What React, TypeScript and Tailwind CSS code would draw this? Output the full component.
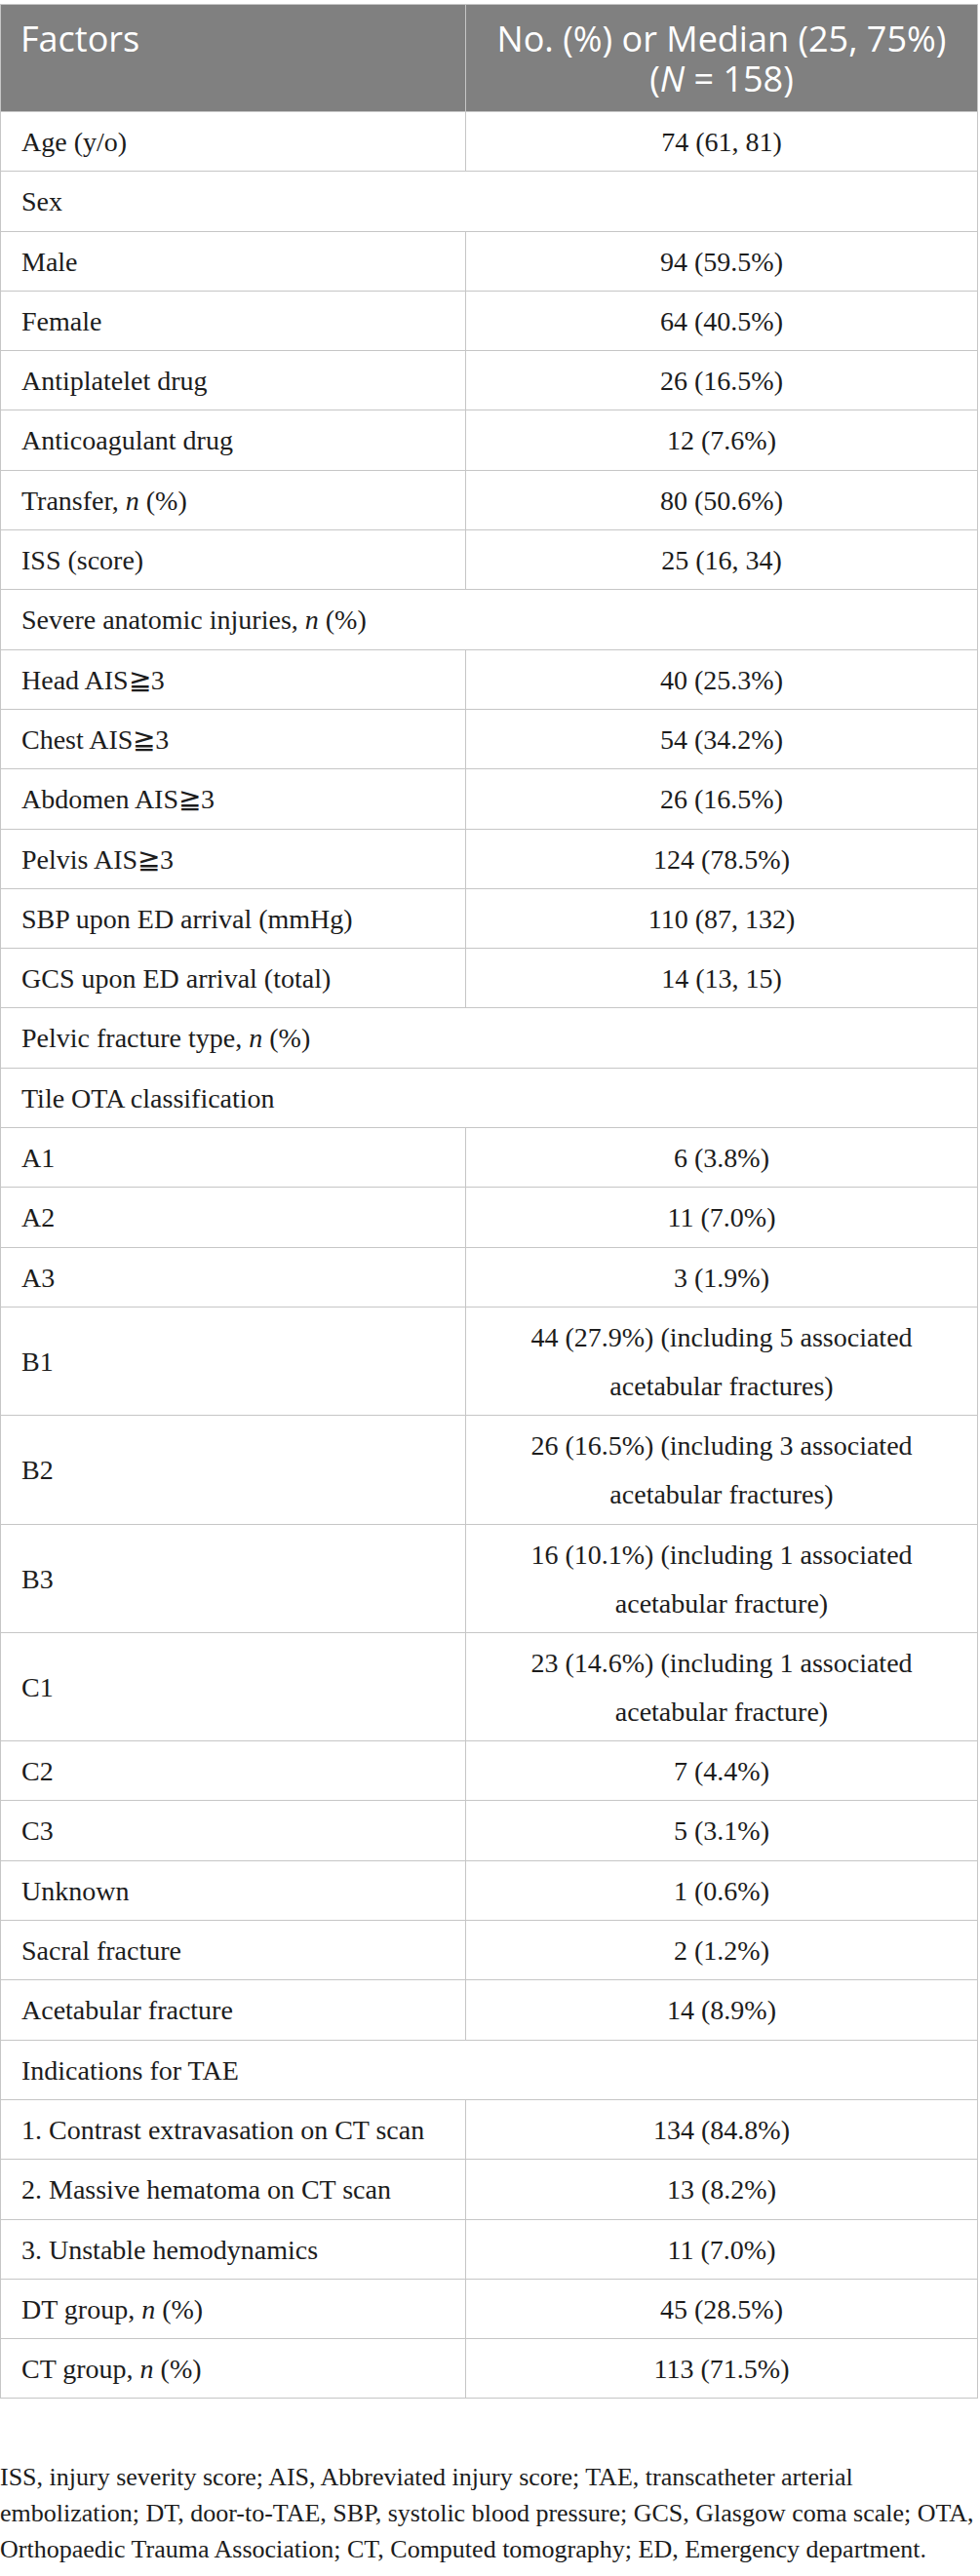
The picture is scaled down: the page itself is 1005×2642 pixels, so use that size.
/*
 * Table — baseline characteristics of TAE patients
 * Journal-style table: grey header band, hairline grid, serif body
 */

import type { ReactNode } from "react";

type Row =
  | { kind: "group"; label: ReactNode }
  | { kind: "item"; label: ReactNode; value: ReactNode };

const n = <i>n</i>;

const rows: Row[] = [
  { kind: "item", label: "Age (y/o)", value: "74 (61, 81)" },
  { kind: "group", label: "Sex" },
  { kind: "item", label: "Male", value: "94 (59.5%)" },
  { kind: "item", label: "Female", value: "64 (40.5%)" },
  { kind: "item", label: "Antiplatelet drug", value: "26 (16.5%)" },
  { kind: "item", label: "Anticoagulant drug", value: "12 (7.6%)" },
  { kind: "item", label: <>Transfer, {n} (%)</>, value: "80 (50.6%)" },
  { kind: "item", label: "ISS (score)", value: "25 (16, 34)" },
  { kind: "group", label: <>Severe anatomic injuries, {n} (%)</> },
  { kind: "item", label: "Head AIS≧3", value: "40 (25.3%)" },
  { kind: "item", label: "Chest AIS≧3", value: "54 (34.2%)" },
  { kind: "item", label: "Abdomen AIS≧3", value: "26 (16.5%)" },
  { kind: "item", label: "Pelvis AIS≧3", value: "124 (78.5%)" },
  { kind: "item", label: "SBP upon ED arrival (mmHg)", value: "110 (87, 132)" },
  { kind: "item", label: "GCS upon ED arrival (total)", value: "14 (13, 15)" },
  { kind: "group", label: <>Pelvic fracture type, {n} (%)</> },
  { kind: "group", label: "Tile OTA classification" },
  { kind: "item", label: "A1", value: "6 (3.8%)" },
  { kind: "item", label: "A2", value: "11 (7.0%)" },
  { kind: "item", label: "A3", value: "3 (1.9%)" },
  { kind: "item", label: "B1", value: <>44 (27.9%) (including 5 associated<br />acetabular fractures)</> },
  { kind: "item", label: "B2", value: <>26 (16.5%) (including 3 associated<br />acetabular fractures)</> },
  { kind: "item", label: "B3", value: <>16 (10.1%) (including 1 associated<br />acetabular fracture)</> },
  { kind: "item", label: "C1", value: <>23 (14.6%) (including 1 associated<br />acetabular fracture)</> },
  { kind: "item", label: "C2", value: "7 (4.4%)" },
  { kind: "item", label: "C3", value: "5 (3.1%)" },
  { kind: "item", label: "Unknown", value: "1 (0.6%)" },
  { kind: "item", label: "Sacral fracture", value: "2 (1.2%)" },
  { kind: "item", label: "Acetabular fracture", value: "14 (8.9%)" },
  { kind: "group", label: "Indications for TAE" },
  { kind: "item", label: "1. Contrast extravasation on CT scan", value: "134 (84.8%)" },
  { kind: "item", label: "2. Massive hematoma on CT scan", value: "13 (8.2%)" },
  { kind: "item", label: "3. Unstable hemodynamics", value: "11 (7.0%)" },
  { kind: "item", label: <>DT group, {n} (%)</>, value: "45 (28.5%)" },
  { kind: "item", label: <>CT group, {n} (%)</>, value: "113 (71.5%)" },
];

const cell = "border border-[#c6c6c6] pt-[6px] pb-[4.3px] leading-[50px] align-middle";

export default function App() {
  return (
    <div className="min-h-screen bg-white pt-[4px] text-[#1c1c1c]">
      <table
        className="w-[1003px] table-fixed border-collapse text-[28px]"
        style={{ fontFamily: '"Liberation Serif", "Times New Roman", serif' }}
      >
        <colgroup>
          <col className="w-[477px]" />
          <col />
        </colgroup>
        <thead>
          <tr
            className="bg-[#808080] text-white text-[36px] leading-[41px]"
            style={{ fontFamily: '"Open Sans", "Noto Sans", sans-serif' }}
          >
            <th className="border border-[#c6c6c6] pl-[20px] pt-[13.5px] pb-[13.5px] text-left align-top font-normal">
              Factors
            </th>
            <th className="border border-[#c6c6c6] px-[10px] pt-[13.5px] pb-[13.5px] text-center align-top font-normal">
              No. (%) or Median (25, 75%)
              <br />(<i>N</i> = 158)
            </th>
          </tr>
        </thead>
        <tbody>
          {rows.map((row, i) =>
            row.kind === "group" ? (
              <tr key={i}>
                <td colSpan={2} className={`${cell} pl-[21px] text-left`}>
                  {row.label}
                </td>
              </tr>
            ) : (
              <tr key={i}>
                <td className={`${cell} pl-[21px] text-left`}>{row.label}</td>
                <td className={`${cell} px-[8px] text-center`}>{row.value}</td>
              </tr>
            )
          )}
        </tbody>
      </table>

      {/* Abbreviations */}
      <p
        className="mt-[62px] w-[1003px] text-[26px] leading-[37px]"
        style={{ fontFamily: '"Liberation Serif", "Times New Roman", serif' }}
      >
        ISS, injury severity score; AIS, Abbreviated injury score; TAE, transcatheter arterial
        embolization; DT, door-to-TAE, SBP, systolic blood pressure; GCS, Glasgow coma scale; OTA,
        Orthopaedic Trauma Association; CT, Computed tomography; ED, Emergency department.
      </p>
    </div>
  );
}
